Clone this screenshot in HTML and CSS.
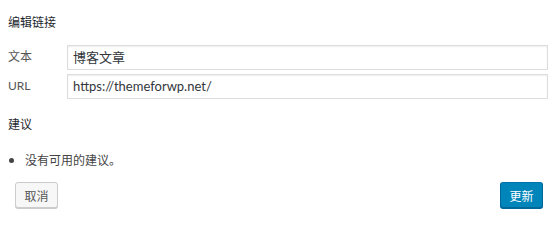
FILE: index.html
```html
<!DOCTYPE html>
<html lang="zh">
<head>
<meta charset="utf-8">
<link rel="stylesheet" href="styles.css">
</head>
<body>
<div class="dialog">
  <div class="section-title">编辑链接</div>
  <div class="fields">
    <div class="row">
      <label class="label">文本</label>
      <div class="input">博客文章</div>
    </div>
    <div class="row">
      <label class="label">URL</label>
      <div class="input">https://themeforwp.net/</div>
    </div>
  </div>
  <div class="section-title suggest">建议</div>
  <ul class="list">
    <li>没有可用的建议。</li>
  </ul>
  <div class="actions">
    <button class="btn">取消</button>
    <button class="btn primary">更新</button>
  </div>
</div>
</body>
</html>
```
FILE: styles.css
```css
html, body {
  margin: 0;
  padding: 0;
  background: #fff;
}
body {
  font-family: "Lato", "Noto Sans CJK SC", sans-serif;
  color: #444;
  width: 550px;
  height: 218px;
  overflow: hidden;
}
.dialog {
  padding: 13px 2px 0 8px;
}
.section-title {
  font-family: "Noto Sans CJK SC", sans-serif;
  font-size: 12px;
  line-height: 18px;
  color: #23282d;
  height: 18px;
}
.fields {
  margin-top: 14px;
  display: flex;
  flex-direction: column;
  gap: 4px;
}
.row {
  display: flex;
  align-items: center;
}
.label {
  width: 59px;
  font-size: 12px;
  color: #555;
  line-height: 16px;
  margin-top: -2px;
}
.input {
  flex: 1;
  height: 25px;
  box-sizing: border-box;
  border: 1px solid #ddd;
  box-shadow: inset 0 1px 2px rgba(0,0,0,0.07);
  font-size: 13px;
  line-height: 23px;
  padding: 0 5px;
  color: #32373c;
  background: #fff;
}
.suggest {
  margin-top: 16px;
}
.list {
  margin: 19px 0 0 0;
  padding: 0 0 0 17px;
  font-size: 12px;
  line-height: 16px;
  color: #444;
  font-family: "Noto Sans CJK SC", sans-serif;
}
.actions {
  display: flex;
  justify-content: space-between;
  margin-top: 14px;
  padding: 0 5px 0 7px;
}
.btn {
  font-family: "Noto Sans CJK SC", sans-serif;
  font-size: 12px;
  height: 26px;
  width: 43px;
  padding: 0;
  border: 1px solid #ccc;
  border-radius: 3px;
  background: #f7f7f7;
  color: #555;
  box-shadow: 0 1px 0 #ccc;
}
.btn.primary {
  background: #0085ba;
  border-color: #0073aa #006799 #006799;
  color: #fff;
  box-shadow: 0 1px 0 #006799;
}
```
